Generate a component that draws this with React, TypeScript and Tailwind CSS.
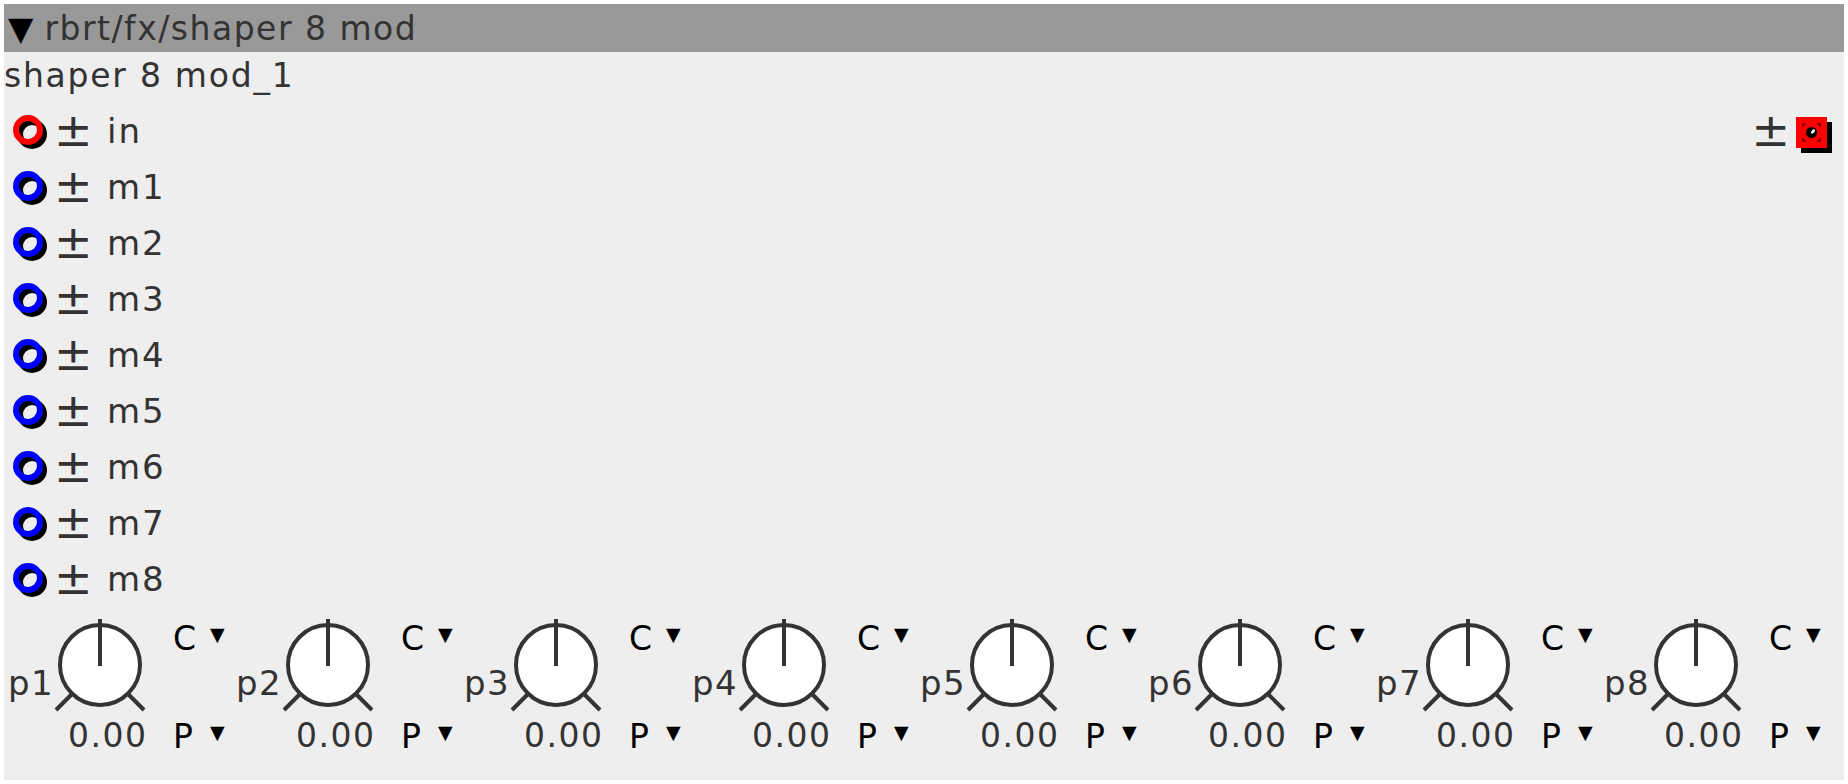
import React from "react";

const Ring = ({ color }: { color: string }) => (
  <svg width="40" height="40" viewBox="0 0 40 40" className="shrink-0">
    <circle cx="19" cy="23" r="12" fill="none" stroke="#000" strokeWidth="6" />
    <circle cx="15" cy="19" r="12" fill="none" stroke={color} strokeWidth="6" />
  </svg>
);

const OutJack = () => (
  <svg width="36" height="36" viewBox="0 0 36 36" className="shrink-0 mt-[8px]">
    <rect x="5" y="5" width="31" height="31" fill="#000" />
    <rect x="0" y="0" width="31" height="31" fill="#ff0000" />
    <path d="M7 10V7h3M21 7h3v3M24 21v3h-3M10 24H7v-3" fill="none" stroke="#600" strokeWidth="1.5" />
    <circle cx="15.5" cy="15.5" r="5.5" fill="#000" />
    <ellipse cx="17" cy="14.5" rx="2.5" ry="1.5" transform="rotate(-45 17 14.5)" fill="#fff" />
  </svg>
);

const Knob = () => (
  <svg width="100" height="100" viewBox="0 0 100 100" className="block">
    <circle cx="50" cy="50" r="40" fill="#fff" stroke="#333" strokeWidth="4" />
    <line x1="50" y1="4" x2="50" y2="51" stroke="#333" strokeWidth="4" />
    <line x1="22" y1="79" x2="6" y2="95" stroke="#333" strokeWidth="4" />
    <line x1="78" y1="79" x2="94" y2="95" stroke="#333" strokeWidth="4" />
  </svg>
);

const rows = ["in", "m1", "m2", "m3", "m4", "m5", "m6", "m7", "m8"];

export default function App() {
  return (
    <div className="w-[1848px] h-[784px] bg-white p-[4px] font-['DejaVu_Sans',sans-serif] text-[33px] leading-[33px] text-[#333333]">
      <div className="h-[776px] bg-[#eeeeee] flex flex-col">
        <div className="h-[48px] bg-[#999999] flex items-center pl-[4px] shrink-0">
          <span className="text-black">▼</span>
          <span className="ml-[11px] tracking-[1.5px]">rbrt/fx/shaper 8 mod</span>
        </div>
        <div className="h-[51px] flex items-center shrink-0 tracking-[1.75px] pb-[4px]">
          <span>shaper 8 mod_1</span>
        </div>
        <div className="flex flex-col">
          {rows.map((r, i) => (
            <div key={r} className="h-[56px] flex items-center">
              <div className="pl-[9px]">
                <Ring color={i === 0 ? "#ff0000" : "#0000ff"} />
              </div>
              <span className="ml-[1px] text-[46px] leading-[46px] w-[46px] mt-[-2px]">±</span>
              <span className="ml-[7px] text-[34px] tracking-[2px]">{r}</span>
              {i === 0 && (
                <div className="ml-auto flex items-center pr-[12px]">
                  <span className="text-[46px] leading-[46px] mr-[6px] mt-[-2px]">±</span>
                  <OutJack />
                </div>
              )}
            </div>
          ))}
        </div>
        <div className="flex">
          {Array.from({ length: 8 }).map((_, i) => (
            <div key={i} className="w-[228px] flex shrink-0">
              <div className="w-[46px] pl-[4px] pt-[60px] tracking-[1.5px] text-[34px] whitespace-nowrap">p{i + 1}</div>
              <div className="w-[100px] pt-[8px]">
                <Knob />
                <div className="mt-[4px] pl-[18px] whitespace-nowrap tracking-[1.5px]">0.00</div>
              </div>
              <div className="pl-[23px] pt-[15px] text-black">
                <div className="flex items-start">
                  <span>C</span>
                  <span className="ml-[14px] text-[19px] leading-[19px] mt-[3px]">▼</span>
                </div>
                <div className="flex items-start mt-[65px]">
                  <span>P</span>
                  <span className="ml-[17px] text-[19px] leading-[19px] mt-[3px]">▼</span>
                </div>
              </div>
            </div>
          ))}
        </div>
      </div>
    </div>
  );
}
